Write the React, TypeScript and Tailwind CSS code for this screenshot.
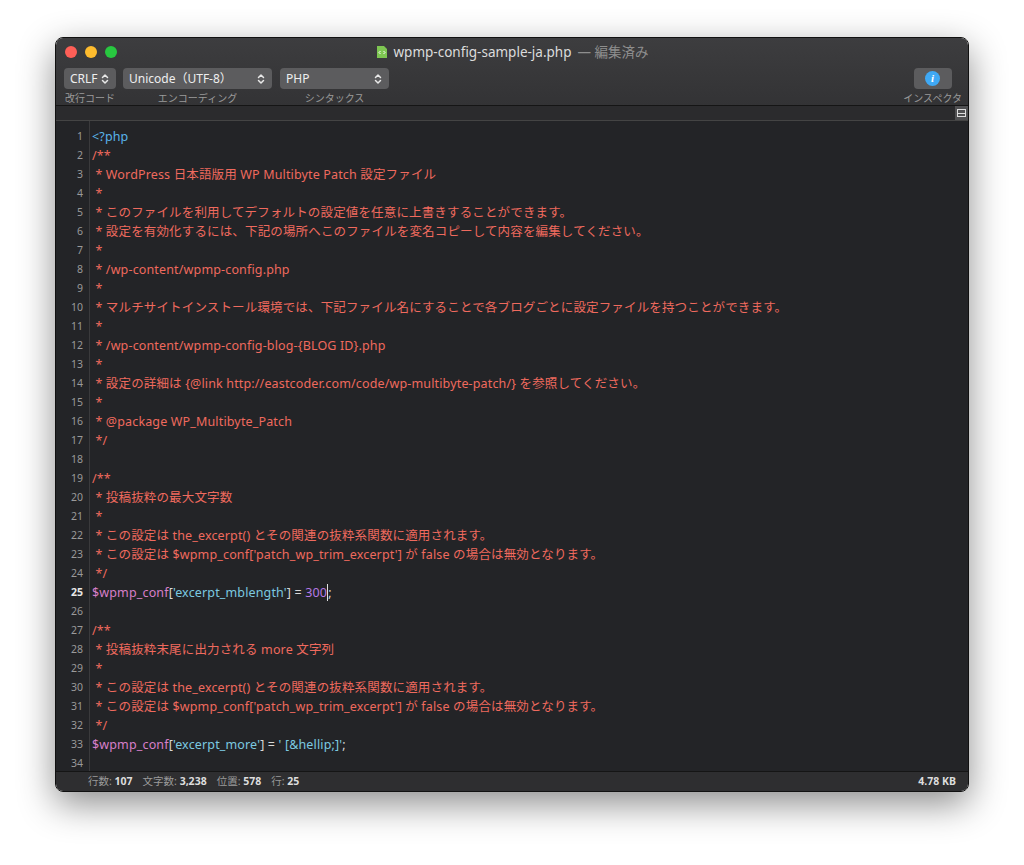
import React from "react";

const C = "text-[#ef6a5e]";
const lines: React.ReactNode[] = [
  <span className="text-[#59b4ea]">&lt;?php</span>,
  <span className={C}>/**</span>,
  <span className={C}> * WordPress 日本語版用 WP Multibyte Patch 設定ファイル</span>,
  <span className={C}> *</span>,
  <span className={C}> * このファイルを利用してデフォルトの設定値を任意に上書きすることができます。</span>,
  <span className={C}> * 設定を有効化するには、下記の場所へこのファイルを変名コピーして内容を編集してください。</span>,
  <span className={C}> *</span>,
  <span className={C}> * /wp-content/wpmp-config.php</span>,
  <span className={C}> *</span>,
  <span className={C}> * マルチサイトインストール環境では、下記ファイル名にすることで各ブログごとに設定ファイルを持つことができます。</span>,
  <span className={C}> *</span>,
  <span className={C}> * /wp-content/wpmp-config-blog-{"{"}BLOG ID{"}"}.php</span>,
  <span className={C}> *</span>,
  <span className={C}> * 設定の詳細は {"{"}@link http://eastcoder.com/code/wp-multibyte-patch/{"}"} を参照してください。</span>,
  <span className={C}> *</span>,
  <span className={C}> * @package WP_Multibyte_Patch</span>,
  <span className={C}> */</span>,
  "",
  <span className={C}>/**</span>,
  <span className={C}> * 投稿抜粋の最大文字数</span>,
  <span className={C}> *</span>,
  <span className={C}> * この設定は the_excerpt() とその関連の抜粋系関数に適用されます。</span>,
  <span className={C}> * この設定は $wpmp_conf['patch_wp_trim_excerpt'] が false の場合は無効となります。</span>,
  <span className={C}> */</span>,
  <>
    <span className="text-[#d77fc9]">$wpmp_conf</span>
    <span className="text-[#d8d8d8]">[</span>
    <span className="text-[#7cc9e0]">'excerpt_mblength'</span>
    <span className="text-[#d8d8d8]">] = </span>
    <span className="text-[#b57ae6]">300</span>
    <span className="border-l border-[#e0e0e0] text-[#d8d8d8]">;</span>
  </>,
  "",
  <span className={C}>/**</span>,
  <span className={C}> * 投稿抜粋末尾に出力される more 文字列</span>,
  <span className={C}> *</span>,
  <span className={C}> * この設定は the_excerpt() とその関連の抜粋系関数に適用されます。</span>,
  <span className={C}> * この設定は $wpmp_conf['patch_wp_trim_excerpt'] が false の場合は無効となります。</span>,
  <span className={C}> */</span>,
  <>
    <span className="text-[#d77fc9]">$wpmp_conf</span>
    <span className="text-[#d8d8d8]">[</span>
    <span className="text-[#7cc9e0]">'excerpt_more'</span>
    <span className="text-[#d8d8d8]">] = </span>
    <span className="text-[#7cc9e0]">' [&amp;hellip;]'</span>
    <span className="text-[#d8d8d8]">;</span>
  </>,
  "",
];

function Chev() {
  return (
    <svg width="8" height="12" viewBox="0 0 8 12" fill="none" stroke="#e8e8e8" strokeWidth="1.5" strokeLinecap="round" strokeLinejoin="round">
      <path d="M1.5 4.5 4 2l2.5 2.5M1.5 7.5 4 10l2.5-2.5" />
    </svg>
  );
}

function Sel({ label, w }: { label: string; w: string }) {
  return (
    <div className={`h-[21px] ${w} rounded-[4px] bg-[#5c5c5e] flex items-center justify-between pl-[6px] pr-[7px] text-[12px] text-[#eeeeee]`}>
      <span>{label}</span>
      <Chev />
    </div>
  );
}

export default function App() {
  return (
    <div className="w-[1024px] h-[865px] bg-white pt-[37px] pl-[55px]" style={{ fontFamily: '"Noto Sans", "Noto Sans CJK JP", sans-serif' }}>
      <div className="w-[914px] h-[755px] rounded-[8px] overflow-hidden flex flex-col shadow-[0_12px_36px_rgba(0,0,0,0.45)] border border-[#111]">
        <div className="h-[68px] bg-gradient-to-b from-[#3d3d3f] to-[#333335] flex flex-col px-[8px] pt-[4px] border-b border-[#151515]">
          <div className="relative h-[20px] flex items-center">
            <div className="flex gap-[8px] pl-[1px]">
              <div className="w-[12px] h-[12px] rounded-full bg-[#fe5f57]" />
              <div className="w-[12px] h-[12px] rounded-full bg-[#febc2e]" />
              <div className="w-[12px] h-[12px] rounded-full bg-[#28c840]" />
            </div>
            <div className="absolute left-0 right-0 top-0 h-[20px] flex items-center justify-center gap-[6px] text-[13.5px]">
              <svg width="12" height="14" viewBox="0 0 12 14"><path d="M1 1h7l3 3v9H1z" fill="#7ec652" /><path d="M4.5 6 3 7.5 4.5 9M7.5 6 9 7.5 7.5 9" stroke="#fff" strokeWidth="1" fill="none" /></svg>
              <span className="text-[#dcdcdc]">wpmp-config-sample-ja.php</span>
              <span className="text-[#8e8e8e]">— 編集済み</span>
            </div>
          </div>
          <div className="flex items-start mt-[6px]">
            <div className="flex flex-col items-center gap-[3px]">
              <Sel label="CRLF" w="w-[52px]" />
              <span className="text-[10px] text-[#9a9a9a] leading-[12px]">改行コード</span>
            </div>
            <div className="flex flex-col items-center gap-[3px] ml-[7px]">
              <Sel label="Unicode（UTF-8）" w="w-[149px]" />
              <span className="text-[10px] text-[#9a9a9a] leading-[12px]">エンコーディング</span>
            </div>
            <div className="flex flex-col items-center gap-[3px] ml-[8px]">
              <Sel label="PHP" w="w-[109px]" />
              <span className="text-[10px] text-[#9a9a9a] leading-[12px]">シンタックス</span>
            </div>
            <div className="ml-auto flex flex-col items-center gap-[3px] mr-[-2px]">
              <div className="w-[38px] h-[21px] rounded-[4px] bg-[#5c5c5e] flex items-center justify-center">
                <div className="w-[15px] h-[15px] rounded-full bg-[#3fa9f5] text-white text-[11px] font-bold italic flex items-center justify-center leading-none" style={{ fontFamily: '"Liberation Serif", serif' }}>i</div>
              </div>
              <span className="text-[10px] text-[#9a9a9a] leading-[12px]">インスペクタ</span>
            </div>
          </div>
        </div>
        <div className="h-[15px] bg-[#2b2b2d] border-b border-[#444] flex justify-end">
          <div className="w-[13px] h-[14px] bg-[#505052] flex items-center justify-center">
            <div className="w-[9px] h-[8px] border border-[#ddd] flex flex-col justify-center"><div className="h-px bg-[#ddd]" /></div>
          </div>
        </div>
        <div className="flex-1 bg-[#232427] flex overflow-hidden text-[12.5px]" style={{ fontFamily: '"Noto Sans", "Noto Sans CJK JP", sans-serif' }}>
          <div className="w-[34px] border-r border-[#3a3a3c] pt-[6px] flex flex-col items-end pr-[6px]">
            {lines.map((_, i) => (
              <div key={i} className={`h-[19px] leading-[19px] text-[10.5px] ${i === 24 ? "text-[#e8e8e8] font-bold" : "text-[#9a9a9a]"}`}>{i + 1}</div>
            ))}
          </div>
          <div className="flex-1 pt-[6px] pl-[2px]">
            {lines.map((l, i) => (
              <div key={i} className="h-[19px] leading-[19px] whitespace-pre tracking-[0.15px]">{l}</div>
            ))}
          </div>
        </div>
        <div className="h-[20px] bg-[#2e2e30] border-t border-[#151515] flex items-center pl-[32px] pr-[12px] text-[10.5px] text-[#9a9a9a]">
          <span>行数: <b className="text-[#dddddd]">107</b></span>
          <span className="ml-[10px]">文字数: <b className="text-[#dddddd]">3,238</b></span>
          <span className="ml-[10px]">位置: <b className="text-[#dddddd]">578</b></span>
          <span className="ml-[10px]">行: <b className="text-[#dddddd]">25</b></span>
          <b className="ml-auto text-[#dddddd]">4.78 KB</b>
        </div>
      </div>
    </div>
  );
}
